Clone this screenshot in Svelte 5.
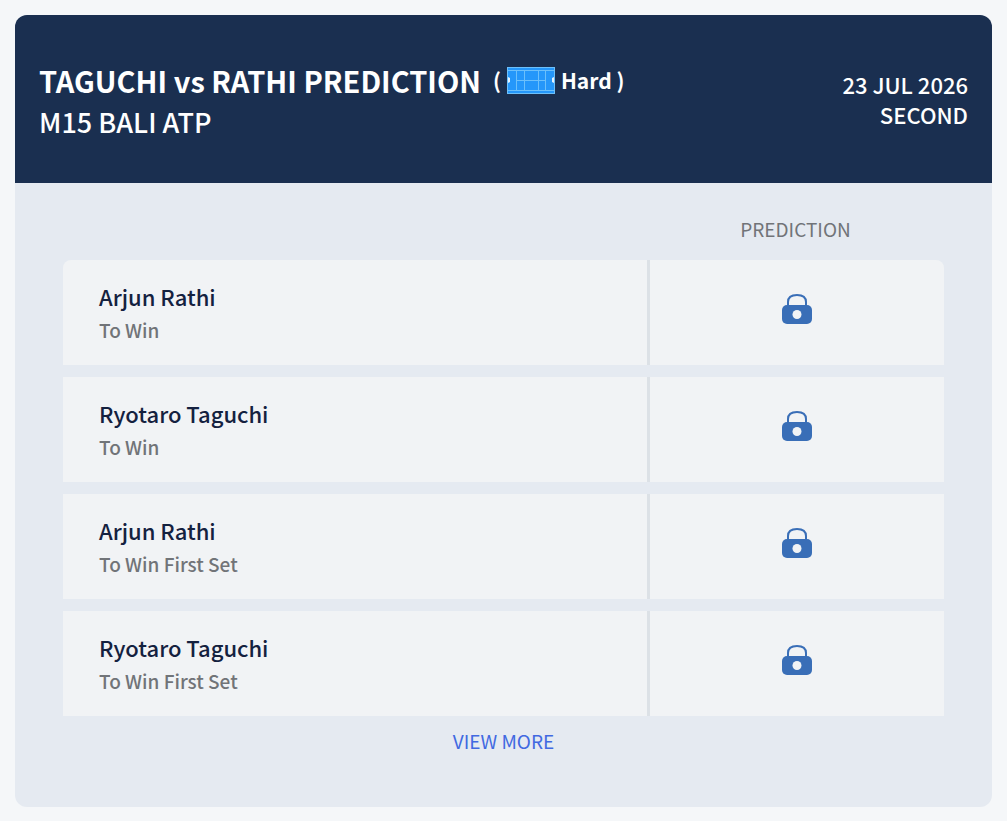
<script>
  const match = {
    title: 'TAGUCHI vs RATHI PREDICTION',
    surface: 'Hard',
    tournament: 'M15 BALI ATP',
    date: '23 JUL 2026',
    round: 'SECOND'
  };

  const markets = [
    { player: 'Arjun Rathi', bet: 'To Win' },
    { player: 'Ryotaro Taguchi', bet: 'To Win' },
    { player: 'Arjun Rathi', bet: 'To Win First Set' },
    { player: 'Ryotaro Taguchi', bet: 'To Win First Set' }
  ];
</script>

<article class="card">
  <header>
    <div class="event">
      <h1>
        {match.title}
        <span class="surface">
          (
          <svg class="court" viewBox="0 0 48 27" aria-hidden="true">
            <rect width="48" height="27" fill="#2597fa" />
            <g fill="none" stroke="#6cc0fb">
              <rect x="0.5" y="0.5" width="47" height="26" />
              <path d="M1 3.500H47M1 23.500H47M9.500 4V23M17.500 4V23M31.500 4V23M38.500 4V23M9 13.500H39" />
            </g>
            <path d="M1 10l2 1v4l-2 1zM47 10l-2 1v4l2 1z" fill="#e3f3ff" />
          </svg>
          {match.surface} )
        </span>
      </h1>
      <h2>{match.tournament}</h2>
    </div>
    <div class="when">
      <span>{match.date}</span>
      <span>{match.round}</span>
    </div>
  </header>

  <div class="body">
    <table>
      <thead>
        <tr>
          <td></td>
          <th scope="col">PREDICTION</th>
        </tr>
      </thead>
      <tbody>
        {#each markets as m}
          <tr>
            <td class="market">
              <div class="player">{m.player}</div>
              <div class="bet">{m.bet}</div>
            </td>
            <td class="pick">
              <svg class="lock" viewBox="0 0 30 30" role="img" aria-label="Locked">
                <path d="M6 13V8C6 3.500 9 1 15 1s9 2.500 9 7V13" fill="none" stroke="#396eb7" stroke-width="2" />
                <rect y="11" width="30" height="19" rx="5" fill="#396eb7" />
                <circle cx="15" cy="20.500" r="4.500" fill="#f1f3f5" />
              </svg>
            </td>
          </tr>
        {/each}
      </tbody>
    </table>
    <a class="more" href="#more">VIEW MORE</a>
  </div>
</article>

<style>
  :global(body) { background: #f5f7f9; }
  .card {
    margin: 15px;
    border-radius: 12px;
    overflow: hidden;
    background: #e5eaf1;
    font-family: "Noto Sans CJK JP", "Noto Sans", sans-serif;
  }
  header {
    display: flex;
    align-items: center;
    justify-content: space-between;
    gap: 24px;
    padding: 40px 24px;
    background: #1a2f50;
    color: #fff;
  }
  .event { padding-top: 4px; }
  h1, h2 { margin: 0; line-height: 42px; }
  h1 {
    display: flex;
    flex-wrap: wrap;
    align-items: center;
    column-gap: 12px;
    font-size: 29px;
    font-weight: 700;
  }
  h2 { font-size: 27px; font-weight: 500; }
  .surface {
    display: flex;
    align-items: center;
    gap: 6px;
    font-size: 21px;
  }
  .court { width: 48px; height: 27px; }
  .when {
    display: flex;
    flex-direction: column;
    text-align: right;
    font-size: 22px;
    font-weight: 500;
    line-height: 30px;
  }
  .body { padding: 17px 48px 53px; text-align: center; }
  table { width: 100%; border-spacing: 0 12px; table-layout: fixed; }
  td { padding: 0; }
  th {
    width: 297px;
    padding: 0 0 2px;
    font-size: 19px;
    font-weight: 400;
    line-height: 34px;
    color: #717478;
  }
  .market, .pick { background: #f1f3f5; }
  .market { padding: 19px 36px 18px; text-align: left; }
  .pick { padding-bottom: 8px; border-left: 3px solid #dce1e6; }
  tbody tr:first-child .market { border-top-left-radius: 8px; }
  tbody tr:first-child .pick { border-top-right-radius: 8px; }
  .player, .bet { font-weight: 500; line-height: 34px; }
  .player { font-size: 22px; color: #14213f; }
  .bet { font-size: 19px; color: #717478; }
  .lock { width: 30px; height: 30px; vertical-align: middle; }
  .more {
    display: block;
    width: max-content;
    margin: 0 auto;
    font-size: 19px;
    line-height: 26px;
    color: #4169e1;
    text-decoration: none;
  }
</style>
